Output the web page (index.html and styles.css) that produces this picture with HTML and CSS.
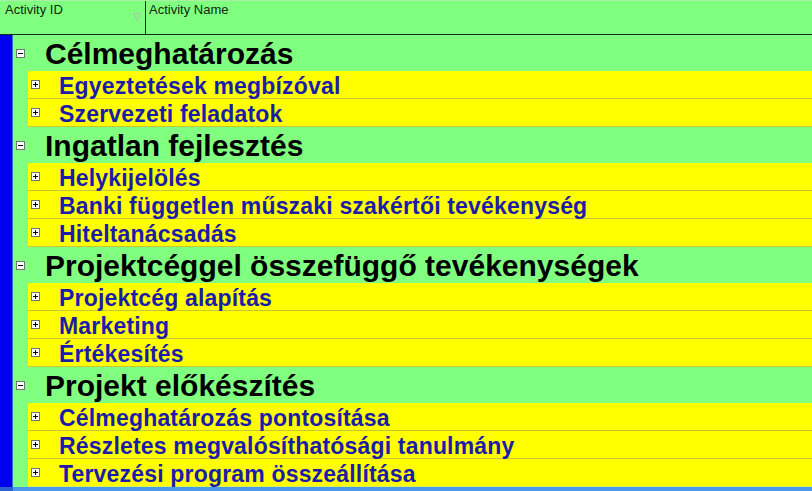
FILE: index.html
```html
<!DOCTYPE html>
<html>
<head>
<meta charset="utf-8">
<link rel="stylesheet" href="styles.css">
</head>
<body>
<div class="grid">
  <div class="header">
    <div class="hcell hid">Activity ID
      <svg class="sort" width="8" height="8" viewBox="0 0 8 8"><path d="M0.5 0.5 L7.5 0.5 L4 7.5 Z" fill="none" stroke="#a8c8a8" stroke-width="1"/></svg>
    </div>
    <div class="hcell hname">Activity Name</div>
  </div>
  <div class="body">
    <div class="bluebar"></div>
    <div class="rows">
      <div class="group"><span class="tog minus"></span><span class="gtext">Célmeghatározás</span></div>
      <div class="child"><div class="cin"><span class="tog plus"></span><span class="ctext">Egyeztetések megbízóval</span></div></div>
      <div class="child"><div class="cin"><span class="tog plus"></span><span class="ctext">Szervezeti feladatok</span></div></div>
      <div class="group"><span class="tog minus"></span><span class="gtext">Ingatlan fejlesztés</span></div>
      <div class="child"><div class="cin"><span class="tog plus"></span><span class="ctext">Helykijelölés</span></div></div>
      <div class="child"><div class="cin"><span class="tog plus"></span><span class="ctext">Banki független műszaki szakértői tevékenység</span></div></div>
      <div class="child"><div class="cin"><span class="tog plus"></span><span class="ctext">Hiteltanácsadás</span></div></div>
      <div class="group"><span class="tog minus"></span><span class="gtext">Projektcéggel összefüggő tevékenységek</span></div>
      <div class="child"><div class="cin"><span class="tog plus"></span><span class="ctext">Projektcég alapítás</span></div></div>
      <div class="child"><div class="cin"><span class="tog plus"></span><span class="ctext">Marketing</span></div></div>
      <div class="child"><div class="cin"><span class="tog plus"></span><span class="ctext">Értékesítés</span></div></div>
      <div class="group"><span class="tog minus"></span><span class="gtext">Projekt előkészítés</span></div>
      <div class="child"><div class="cin"><span class="tog plus"></span><span class="ctext">Célmeghatározás pontosítása</span></div></div>
      <div class="child"><div class="cin"><span class="tog plus"></span><span class="ctext">Részletes megvalósíthatósági tanulmány</span></div></div>
      <div class="child last"><div class="cin"><span class="tog plus"></span><span class="ctext">Tervezési program összeállítása</span></div></div>
    </div>
  </div>
  <div class="footer"></div>
</div>
</body>
</html>
```
FILE: styles.css
```css
* { box-sizing: border-box; }
html, body { margin: 0; padding: 0; }
body {
  width: 812px;
  height: 491px;
  overflow: hidden;
  background: #80ff80;
  font-family: "Liberation Sans", Arial, sans-serif;
}
.grid { display: flex; flex-direction: column; width: 812px; height: 491px; }
.header {
  display: flex;
  height: 35px;
  background: #80ff80;
  border-top: 1px solid #a8f0a8;
  border-bottom: 1px solid #103010;
}
.hcell {
  position: relative;
  font-size: 13px;
  color: #0a2a0a;
  padding: 2px 0 0 5px;
  line-height: 14px;
}
.hid { width: 146px; border-right: 1px solid #103010; }
.hname { flex: 1; padding-left: 3px; }
.sort { position: absolute; left: 133px; top: 12px; }
.body { display: flex; height: 452px; }
.bluebar { width: 13px; background: #0000f0; border-right: 1px solid #3a6ad0; }
.rows { flex: 1; display: flex; flex-direction: column; }
.group {
  height: 36px;
  display: flex;
  align-items: center;
  background: #80ff80;
}
.group .tog { margin-left: 3px; margin-top: 1px; }
.gtext {
  margin-left: 20px;
  font-size: 30px;
  font-weight: bold;
  color: #000;
  line-height: 30px;
  padding-top: 1px;
}
.child { height: 28px; display: flex; background: #80ff80; }
.cin {
  flex: 1;
  margin-left: 15px;
  background: #ffff00;
  border-bottom: 1px solid #c8c830;
  display: flex;
  align-items: center;
}
.child.last .cin { border-bottom: 1px solid #d8f060; }
.cin .tog { margin-left: 3px; }
.ctext {
  margin-left: 19px;
  font-size: 23px;
  font-weight: bold;
  color: #1c1ca8;
  line-height: 24px;
  padding-top: 2px;
  letter-spacing: 0.18px;
}
.tog {
  position: relative;
  width: 9px;
  height: 9px;
  border: 1px solid #6a7a6a;
  background: #ffffff;
  flex: none;
}
.tog::before {
  content: "";
  position: absolute;
  left: 1px;
  top: 3px;
  width: 5px;
  height: 1px;
  background: #000;
}
.tog.plus::after {
  content: "";
  position: absolute;
  left: 3px;
  top: 1px;
  width: 1px;
  height: 5px;
  background: #000;
}
.footer { height: 4px; background: #4a98e8; border-left: 13px solid #2a60d0; }
```
